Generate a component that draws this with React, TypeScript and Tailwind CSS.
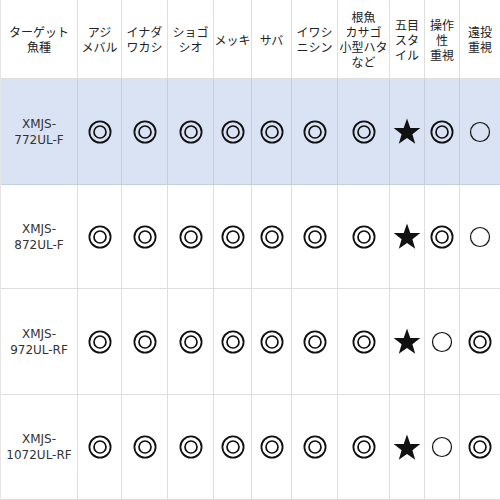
import React from "react";

type Mark = "D" | "O" | "S";

const headers: string[][] = [
  ["ターゲット", "魚種"],
  ["アジ", "メバル"],
  ["イナダ", "ワカシ"],
  ["ショゴ", "シオ"],
  ["メッキ"],
  ["サバ"],
  ["イワシ", "ニシン"],
  ["根魚", "カサゴ", "小型ハタ", "など"],
  ["五目", "スタ", "イル"],
  ["操作", "性", "重視"],
  ["遠投", "重視"],
];

const rows: { model: string[]; marks: Mark[] }[] = [
  { model: ["XMJS-", "772UL-F"], marks: ["D", "D", "D", "D", "D", "D", "D", "S", "D", "O"] },
  { model: ["XMJS-", "872UL-F"], marks: ["D", "D", "D", "D", "D", "D", "D", "S", "D", "O"] },
  { model: ["XMJS-", "972UL-RF"], marks: ["D", "D", "D", "D", "D", "D", "D", "S", "O", "D"] },
  { model: ["XMJS-", "1072UL-RF"], marks: ["D", "D", "D", "D", "D", "D", "D", "S", "O", "D"] },
];

const DoubleCircle = () => (
  <svg width="24" height="24" viewBox="0 0 24 24">
    <circle cx="12" cy="12" r="10.6" fill="none" stroke="#111" strokeWidth="1.8" />
    <circle cx="12" cy="12" r="6" fill="none" stroke="#111" strokeWidth="1.7" />
  </svg>
);

const Circle = () => (
  <svg width="22" height="22" viewBox="0 0 22 22">
    <circle cx="11" cy="11" r="9.5" fill="none" stroke="#111" strokeWidth="1.2" />
  </svg>
);

const Star = () => (
  <svg width="28" height="27" viewBox="0 0 28 27">
    <polygon
      points="14,0.5 17.3,9.9 27.3,10.1 19.4,16.2 22.2,25.8 14,20.1 5.8,25.8 8.6,16.2 0.7,10.1 10.7,9.9"
      fill="#111"
    />
  </svg>
);

const MarkIcon = ({ m }: { m: Mark }) =>
  m === "D" ? <DoubleCircle /> : m === "O" ? <Circle /> : <Star />;

// lines joined with <br /> so each cell is one text block
const Lines = ({ lines }: { lines: string[] }) => (
  <>
    {lines.map((l, i) => (
      <React.Fragment key={i}>
        {i > 0 && <br />}
        {l}
      </React.Fragment>
    ))}
  </>
);

export default function App() {
  return (
    <div
      className="w-[500px] h-[500px] bg-white grid grid-cols-[77px_44px_46px_46px_38px_40px_46px_52px_35px_35px_41px] grid-rows-[79px_106px_104px_106px_105px] text-[12px] text-[#222] border-l border-[#e6e6e6]"
      style={{ fontFamily: '"DejaVu Sans", "Noto Sans CJK JP", sans-serif' }}
    >
      {/* header */}
      {headers.map((lines, i) => (
        <div
          key={i}
          className="flex items-center justify-center border-r border-b border-[#dedede]"
          style={{ fontFamily: '"Noto Sans CJK JP", sans-serif' }}
        >
          <p className="text-center leading-[15px] whitespace-nowrap">
            <Lines lines={lines} />
          </p>
        </div>
      ))}

      {rows.map((r, ri) => {
        const blue = ri === 0;
        const cell = blue
          ? "bg-[#dae3f3] border-r border-b border-[#c6cedd]"
          : "bg-white border-r border-b border-[#dedede]";
        return (
          <React.Fragment key={ri}>
            <div className={`${cell} flex items-center justify-center text-[#333]`}>
              <p className="text-center leading-[16px]">
                <Lines lines={r.model} />
              </p>
            </div>
            {r.marks.map((m, mi) => (
              <div key={mi} className={`${cell} flex items-center justify-center`}>
                <MarkIcon m={m} />
              </div>
            ))}
          </React.Fragment>
        );
      })}
    </div>
  );
}
